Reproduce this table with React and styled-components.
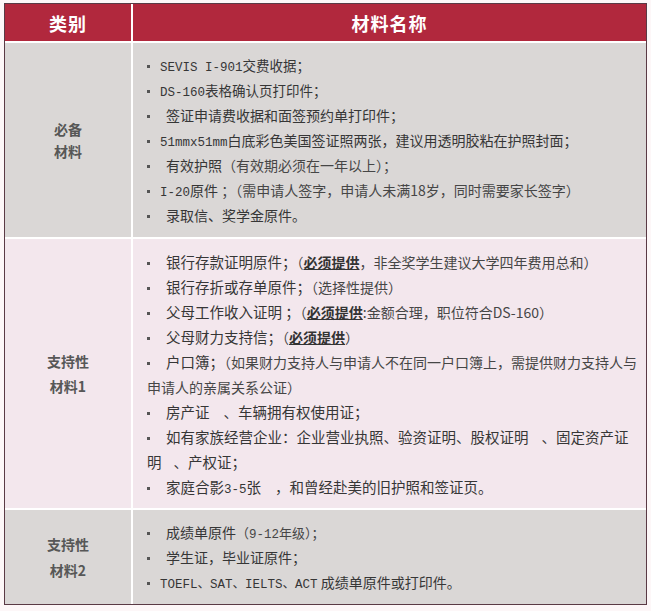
import React from "react";
import styled, { createGlobalStyle } from "styled-components";

const Global = createGlobalStyle`
  html, body { margin: 0; padding: 0; background: #fdf7f8; }
  body { font-family: "Noto Sans CJK SC", "Noto Sans", sans-serif; }
`;

const Page = styled.div`
  padding: 3px 4px 0 4px;
  min-height: 611px;
  box-sizing: border-box;
  background: #fdf7f8;
`;

const Table = styled.div`
  width: 643px;
  box-sizing: border-box;
  border: 1px solid #5a3a45;
  background: #ffffff;
  display: grid;
  grid-template-columns: 126px 513px;
  column-gap: 2px;
  row-gap: 2px;
`;

const HeadCell = styled.div`
  height: 37px;
  background: #b1283d;
  color: #ffffff;
  font-family: "Noto Sans CJK SC", sans-serif;
  font-weight: 700;
  font-size: 18px;
  display: flex;
  align-items: center;
  justify-content: center;
  letter-spacing: 1px;
`;

const tone = (p) => (p.$tone === "pink" ? "#f3e7ed" : "#dad7d6");

const LabelCell = styled.div`
  background: ${tone};
  display: flex;
  flex-direction: column;
  align-items: center;
  justify-content: center;
  color: #575757;
  font-weight: 700;
  font-size: 14px;
  font-family: "Noto Sans CJK SC", sans-serif;
`;

const LabelLine = styled.div`
  line-height: ${(p) => p.$lh}px;
`;

const ContentCell = styled.div`
  background: ${tone};
  padding: 9.5px 6px 9.5px 14px;
  color: #363636;
  font-size: ${(p) => p.$size}px;
  font-family: "Noto Sans CJK SC", sans-serif;
`;

const Item = styled.div`
  line-height: 25px;
  white-space: nowrap;
`;

const Bullet = styled.span`
  display: inline-block;
  width: 3px;
  height: 3px;
  background: #555555;
  vertical-align: middle;
  margin-right: ${(p) => (p.$wide ? 16 : 10)}px;
`;

const Gap = styled.span`
  display: inline-block;
  width: ${(p) => p.$w}px;
`;

const Small = styled.span`
  font-size: 13.5px;
  line-height: 1;
`;

const Mono = styled.span`
  font-family: "Liberation Mono", "Noto Sans CJK SC", monospace;
  font-size: 12.5px;
  line-height: 1;
`;

const Note = styled.span`
  font-size: ${(p) => p.$size || 14}px;
  line-height: 1;
  color: #464646;
`;

const Must = styled.span`
  font-weight: 700;
  text-decoration: underline;
  color: #333333;
`;

function Label({ lines, lh }) {
  return lines.map((l) => (
    <LabelLine key={l} $lh={lh}>
      {l}
    </LabelLine>
  ));
}

export default function App() {
  return (
    <Page>
      <Global />
      <Table>
        <HeadCell>类别</HeadCell>
        <HeadCell>材料名称</HeadCell>

        <LabelCell $tone="gray">
          <Label lines={["必备", "材料"]} lh={22} />
        </LabelCell>
        <ContentCell $tone="gray" $size={14}>
          <Item>
            <Bullet />
            <Small>
              <Mono>SEVIS I-901</Mono>交费收据；
            </Small>
          </Item>
          <Item>
            <Bullet />
            <Small>
              <Mono>DS-160</Mono>表格确认页打印件；
            </Small>
          </Item>
          <Item>
            <Bullet $wide />
            签证申请费收据和面签预约单打印件；
          </Item>
          <Item>
            <Bullet />
            <Mono>51mmx51mm</Mono>白底彩色美国签证照两张，建议用透明胶粘在护照封面；
          </Item>
          <Item>
            <Bullet $wide />
            有效护照<Note>（有效期必须在一年以上）；</Note>
          </Item>
          <Item>
            <Bullet />
            <Mono>I-20</Mono>原件 <Note>；（需申请人签字，申请人未满18岁，同时需要家长签字）</Note>
          </Item>
          <Item>
            <Bullet $wide />
            录取信、奖学金原件。
          </Item>
        </ContentCell>

        <LabelCell $tone="pink">
          <Label lines={["支持性", "材料1"]} lh={25} />
        </LabelCell>
        <ContentCell $tone="pink" $size={14.5}>
          <Item>
            <Bullet $wide />
            银行存款证明原件；<Note>（<Must>必须提供</Must>，非全奖学生建议大学四年费用总和）</Note>
          </Item>
          <Item>
            <Bullet $wide />
            银行存折或存单原件；<Note>（选择性提供）</Note>
          </Item>
          <Item>
            <Bullet $wide />
            父母工作收入证明 ；<Note>（<Must>必须提供</Must>:金额合理，职位符合DS-160）</Note>
          </Item>
          <Item>
            <Bullet $wide />
            父母财力支持信；<Note>（<Must>必须提供</Must>）</Note>
          </Item>
          <Item>
            <Bullet $wide />
            户口簿；<Note>（如果财力支持人与申请人不在同一户口簿上，需提供财力支持人与<br />申请人的亲属关系公证）</Note>
          </Item>
          <Item>
            <Bullet $wide />
            房产证<Gap $w={14} />、车辆拥有权使用证；
          </Item>
          <Item>
            <Bullet $wide />
            如有家族经营企业：企业营业执照、验资证明、股权证明<Gap $w={13} />、固定资产证<br />明<Gap $w={12} />、产权证；
          </Item>
          <Item>
            <Bullet $wide />
            家庭合影<Mono>3-5</Mono>张<Gap $w={14} />，和曾经赴美的旧护照和签证页。
          </Item>
        </ContentCell>

        <LabelCell $tone="gray">
          <Label lines={["支持性", "材料2"]} lh={26} />
        </LabelCell>
        <ContentCell $tone="gray" $size={14}>
          <Item>
            <Bullet $wide />
            成绩单原件<Note $size={13}>（<Mono>9-12</Mono>年级）；</Note>
          </Item>
          <Item>
            <Bullet $wide />
            学生证，毕业证原件；
          </Item>
          <Item>
            <Bullet />
            <Mono>TOEFL、SAT、IELTS、ACT</Mono> 成绩单原件或打印件。
          </Item>
        </ContentCell>
      </Table>
    </Page>
  );
}
